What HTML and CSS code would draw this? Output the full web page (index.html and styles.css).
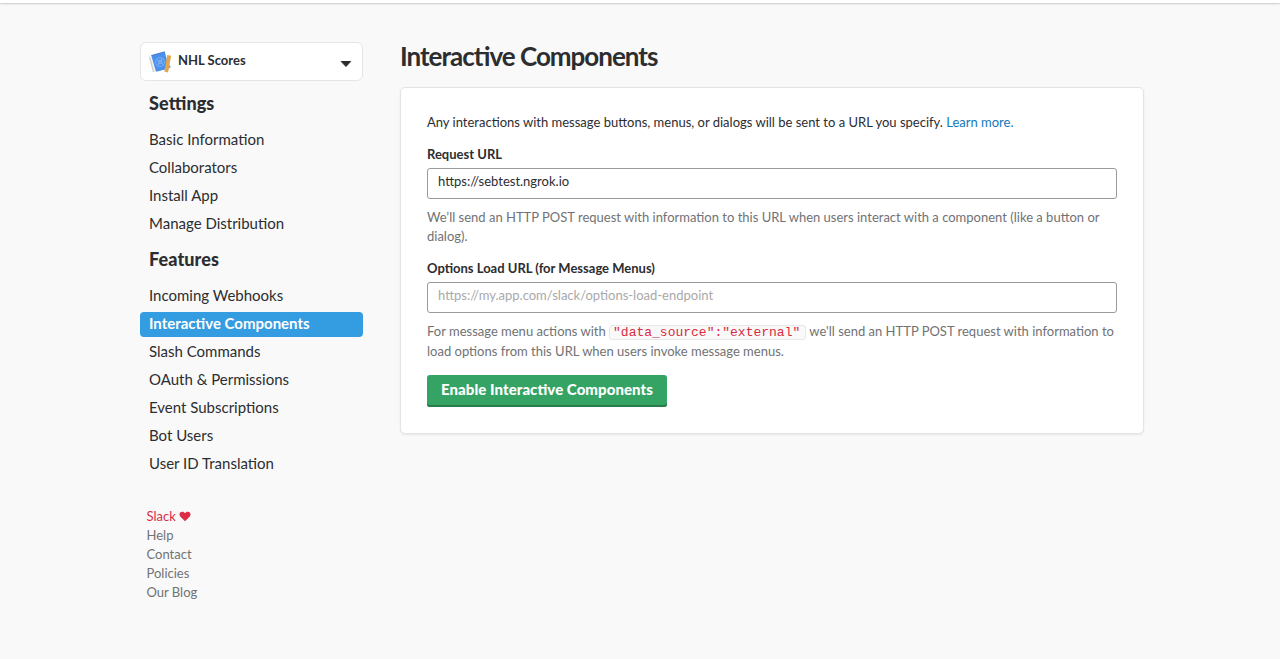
FILE: index.html
```html
<!DOCTYPE html>
<html lang="en">
<head>
<meta charset="utf-8">
<title>Interactive Components</title>
<link rel="stylesheet" href="styles.css">
</head>
<body>
<header class="topbar"></header>
<div class="page">
<aside class="sidebar">
<div class="app-picker">
<svg class="app-icon" width="24" height="24" viewBox="0 0 24 24"><path d="M0 7 3 5.500 8 21 4 22.500Z" fill="#f1f1ef"/><path d="M.6 7.200 4.600 22" stroke="#c9cacb" stroke-width="1.200"/><path d="M2.300 5.500 15.800 1.800 20 18.500 7 21.700Z" fill="#4b8fec"/><path d="M2.300 5.500 15.800 1.800" stroke="#2f70c9" stroke-width=".8"/><g fill="none" stroke="#86b7f5" stroke-width=".8"><circle cx="11" cy="12" r="4.500"/><circle cx="11" cy="12" r="2"/><path d="M7 9 15 15M14 8 8 16"/></g><path d="M18.200 5 22.200 5.800 19 22.500 15.300 21.500Z" fill="#e0a650"/><path d="M20.800 14.500 21.500 17.500 20 18Z" fill="#4778b5"/></svg>
<span>NHL Scores</span>
<svg class="caret" width="12" height="8" viewBox="0 0 12 8"><path d="M1.200 1.500h9.400L6 6.500Z" fill="#2c2d30" stroke="#2c2d30" stroke-linejoin="round"/></svg>
</div>
<h2 class="group">Settings</h2>
<nav class="menu"><a>Basic Information</a><a>Collaborators</a><a>Install App</a><a>Manage Distribution</a></nav>
<h2 class="group">Features</h2>
<nav class="menu"><a>Incoming Webhooks</a><a class="active">Interactive Components</a><a>Slash Commands</a><a>OAuth &amp; Permissions</a><a>Event Subscriptions</a><a>Bot Users</a><a>User ID Translation</a></nav>
<footer class="links"><a class="love">Slack <svg width="12" height="11" viewBox="0 0 12 11"><path d="M6 10.200 1.200 5.500C-.5 3 1 .7 3.100 .7 4.500 .7 5.500 1.400 6 2.200 6.500 1.400 7.500 .7 8.900 .7 11 .7 12.500 3 10.800 5.500Z" fill="#dc2d44"/></svg></a><a>Help</a><a>Contact</a><a>Policies</a><a>Our Blog</a></footer>
</aside>
<main class="main">
<h1>Interactive Components</h1>
<section class="card">
<p class="intro">Any interactions with message buttons, menus, or dialogs will be sent to a URL you specify. <a class="link">Learn more.</a></p>
<label for="req">Request URL</label>
<input id="req" value="https://sebtest.ngrok.io">
<p class="note">We’ll send an HTTP POST request with information to this URL when users interact with a component (like a button or dialog).</p>
<label for="opt">Options Load URL (for Message Menus)</label>
<input id="opt" placeholder="https://my.app.com/slack/options-load-endpoint">
<p class="note second">For message menu actions with <code>"data_source":"external"</code> we'll send an HTTP POST request with information to load options from this URL when users invoke message menus.</p>
<button>Enable Interactive Components</button>
</section>
</main>
</div>
</body>
</html>
```
FILE: styles.css
```css
* { box-sizing: border-box; }
body { margin: 0; background: #f9f9f9; color: #2c2d30; font: 13px/19px Lato, sans-serif; }
.topbar { height: 3px; background: #fff; box-shadow: 0 1px 2px rgba(0,0,0,.2); }
.page { display: flex; gap: 37px; padding: 39px 136px 0 140px; }
.sidebar { width: 223px; flex: none; }
.app-picker { display: flex; align-items: center; height: 39px; padding: 0 10px 0 8px; background: #fff; border: 1px solid #e5e5e5; border-radius: 6px; font-weight: 700; line-height: 17px; }
.app-picker span { margin: 0 auto 3px 5px; }
.app-icon { flex: none; }
.caret { margin-top: 4px; }
.group { margin: 8px 0 11px 9px; font-size: 18px; line-height: 28px; font-weight: 900; letter-spacing: .1px; font-feature-settings: "liga" 1; }
.menu { display: flex; flex-direction: column; gap: 3px; }
.menu + .group { margin-top: 8px; margin-bottom: 11px; }
.menu a { height: 25px; padding-left: 9px; border-radius: 4px; font-size: 15px; line-height: 23px; }
.menu .active { background: #349ce0; color: #fff; font-weight: 700; }
.links { display: flex; flex-direction: column; margin: 30px 0 0 6.5px; color: #717274; }
.love { color: #dc2d44; }
.love svg { margin-left: -.5px; vertical-align: -1px; }
.main { flex: 1; }
h1 { margin: -1px 0 16px; font-size: 26px; line-height: 30px; font-weight: 700; letter-spacing: -1px; font-feature-settings: "liga" 1; }
.card { height: 347px; padding: 25px 26px; background: #fff; border: 1px solid #e4e4e4; border-radius: 5px; box-shadow: 0 1px 2px rgba(0,0,0,.08); }
.intro { margin: 0 0 13px; }
.link { color: #1279bd; }
label { display: block; margin-bottom: 4px; font-weight: 700; }
input { display: block; width: 100%; height: 31px; padding: 0 10px 5px; border: 1px solid #9a9a9c; border-radius: 3px; background: #fff; color: #2c2d30; font: inherit; line-height: 18px; }
input::placeholder { color: #a9a9a9; }
.note { margin: 9px 0 13px; color: #717274; }
.second { line-height: 20px; margin: 8px 0 14px; }
code { display: inline-block; padding: 0 5px 0 3px; border: 1px solid #e8e8e8; border-radius: 3px; background: #f9f9f9; color: #d72b3f; font: 13px/13px "Liberation Mono", monospace; }
button { height: 32px; padding: 0 14px 5px; border: 0; border-radius: 3px; background: #34a364; box-shadow: inset 0 -2px #287c49; color: #fff; font: 900 15px Lato, sans-serif; letter-spacing: .06px; font-feature-settings: "liga" 1; }
```
